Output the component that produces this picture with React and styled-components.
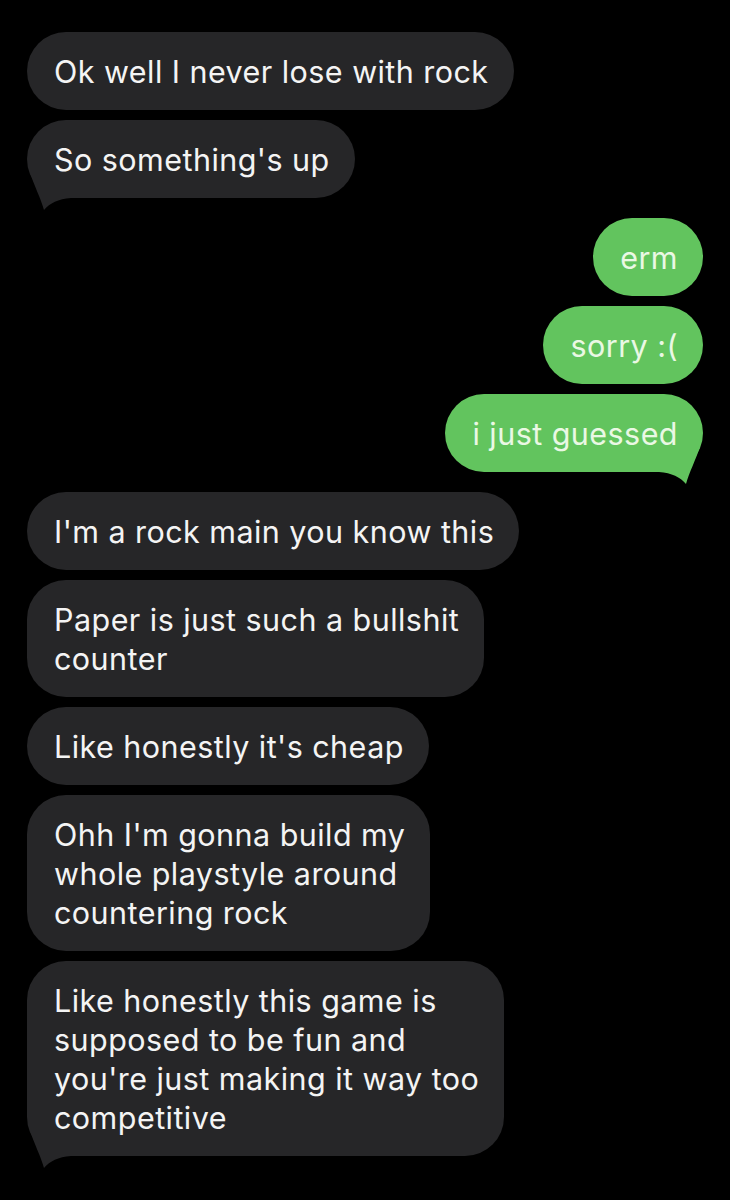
import React from "react";
import styled, { createGlobalStyle } from "styled-components";

const GlobalStyle = createGlobalStyle`
  html, body {
    margin: 0;
    padding: 0;
    background: #000;
  }
  body {
    font-family: Inter, "Liberation Sans", Arial, sans-serif;
    -webkit-font-smoothing: antialiased;
  }
`;

const Page = styled.div`
  background: #000;
  min-height: 1200px;
  box-sizing: border-box;
  padding: 32px 27px 0 27px;
  display: flex;
  flex-direction: column;
  gap: 20px;
`;

const Group = styled.div`
  display: flex;
  flex-direction: column;
  align-items: ${(p) => (p.$sent ? "flex-end" : "flex-start")};
  gap: 10px;
`;

const Bubble = styled.div`
  position: relative;
  box-sizing: border-box;
  padding: 20px 25px 19px 27px;
  border-radius: 39px;
  font-size: 30.5px;
  line-height: 39px;
  letter-spacing: 0.45px;
  white-space: nowrap;
  background: ${(p) => (p.$sent ? "#62c45e" : "#262628")};
  color: ${(p) => (p.$sent ? "#eaf8e4" : "#f4f4f4")};
`;

const TailSvg = styled.svg`
  position: absolute;
  bottom: -12px;
  width: 44px;
  height: 37px;
  ${(p) => (p.$sent ? "right: 0; transform: scaleX(-1);" : "left: 0;")}
`;

const Tail = ({ sent }) => (
  <TailSvg $sent={sent} viewBox="0 0 44 37" aria-hidden="true">
    <path
      d="M3 0 C7 12 14 26 17 37 C23 30 31 26 44 25 L44 0 Z"
      fill={sent ? "#62c45e" : "#262628"}
    />
  </TailSvg>
);

const Message = ({ sent, tail, children }) => (
  <Bubble $sent={sent}>
    {children}
    {tail && <Tail sent={sent} />}
  </Bubble>
);

export default function App() {
  return (
    <>
      <GlobalStyle />
      <Page>
        <Group>
          <Message>Ok well I never lose with rock</Message>
          <Message tail>So something's up</Message>
        </Group>
        <Group $sent>
          <Message sent>erm</Message>
          <Message sent>sorry :(</Message>
          <Message sent tail>i just guessed</Message>
        </Group>
        <Group>
          <Message>I'm a rock main you know this</Message>
          <Message>
            Paper is just such a bullshit
            <br />
            counter
          </Message>
          <Message>Like honestly it's cheap</Message>
          <Message>
            Ohh I'm gonna build my
            <br />
            whole playstyle around
            <br />
            countering rock
          </Message>
          <Message tail>
            Like honestly this game is
            <br />
            supposed to be fun and
            <br />
            you're just making it way too
            <br />
            competitive
          </Message>
        </Group>
      </Page>
    </>
  );
}
